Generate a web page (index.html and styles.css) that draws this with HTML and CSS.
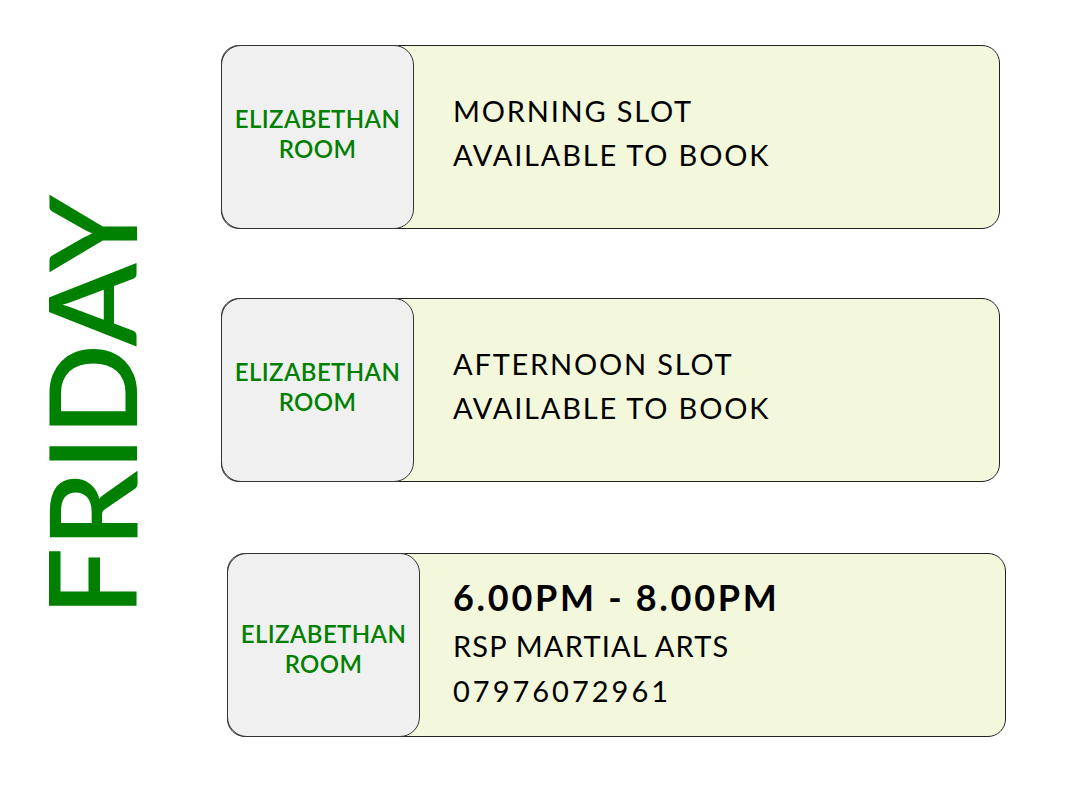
FILE: index.html
```html
<!DOCTYPE html>
<html>
<head>
<meta charset="utf-8">
<link rel="stylesheet" href="styles.css">
</head>
<body>
<div class="page">
  <div class="day-col">
    <div class="day">FRIDAY</div>
  </div>
  <div class="slots">
    <div class="card">
      <div class="room">ELIZABETHAN<br>ROOM</div>
      <div class="info">
        <div class="line">MORNING SLOT</div>
        <div class="line">AVAILABLE TO BOOK</div>
      </div>
    </div>
    <div class="card">
      <div class="room">ELIZABETHAN<br>ROOM</div>
      <div class="info">
        <div class="line">AFTERNOON SLOT</div>
        <div class="line">AVAILABLE TO BOOK</div>
      </div>
    </div>
    <div class="card shifted">
      <div class="room">ELIZABETHAN<br>ROOM</div>
      <div class="info tight">
        <div class="line time">6.00PM - 8.00PM</div>
        <div class="line name">RSP MARTIAL ARTS</div>
        <div class="line digits">07976072961</div>
      </div>
    </div>
  </div>
</div>
</body>
</html>
```

FILE: styles.css
```css
html, body {
  margin: 0;
  padding: 0;
  background: #ffffff;
}
.page {
  width: 1080px;
  height: 802px;
  display: flex;
  font-family: "Lato", "Open Sans", sans-serif;
}
.day-col {
  width: 221px;
  display: flex;
  justify-content: center;
  align-items: center;
  padding-right: 40px;
  padding-top: 8px;
  box-sizing: border-box;
}
.day {
  writing-mode: vertical-rl;
  transform: rotate(180deg);
  font-size: 121px;
  line-height: 1;
  font-weight: 600;
  color: #008000;
  letter-spacing: 0;
}
.slots {
  padding-top: 45px;
  display: flex;
  flex-direction: column;
  gap: 69px;
}
.card {
  width: 779px;
  height: 184px;
  box-sizing: border-box;
  border: 1px solid #222;
  border-radius: 18px;
  background: #f3f8dc;
  display: flex;
}
.card.shifted {
  margin-left: 6px;
  margin-top: 2px;
}
.room {
  width: 193px;
  height: 184px;
  margin: -1px 0 -1px -1px;
  padding-bottom: 6px;
  box-sizing: border-box;
  border: 1px solid #333;
  border-radius: 20px;
  background: #f0f0f0;
  display: flex;
  align-items: center;
  justify-content: center;
  text-align: center;
  color: #008000;
  font-size: 24px;
  line-height: 30px;
  font-weight: 600;
  letter-spacing: 0.4px;
}
.shifted .room {
  padding-bottom: 0;
  padding-top: 8px;
}
.info {
  display: flex;
  flex-direction: column;
  justify-content: center;
  padding-left: 39px;
  padding-bottom: 8px;
  color: #000;
}
.info.tight {
  padding-left: 33px;
  padding-bottom: 6px;
}
.line {
  font-size: 29px;
  line-height: 44px;
  letter-spacing: 1.8px;
}
.tight .line {
  line-height: 45px;
}
.tight .name {
  letter-spacing: 1.2px;
}
.tight .digits {
  letter-spacing: 3px;
}
.tight .time {
  font-size: 36px;
  font-weight: 700;
  line-height: 52px;
  letter-spacing: 2.7px;
}
```
